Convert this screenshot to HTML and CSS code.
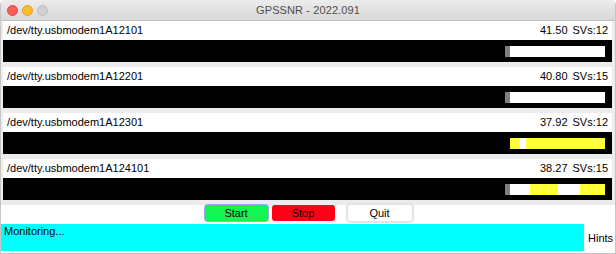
FILE: index.html
```html
<!DOCTYPE html>
<html>
<head>
<meta charset="utf-8">
<title>GPSSNR</title>
<link rel="stylesheet" href="styles.css">
</head>
<body>
<div class="window">
  <div class="titlebar">
    <div class="lights">
      <span class="light red"></span>
      <span class="light yellow"></span>
      <span class="light grey"></span>
    </div>
    <div class="title">GPSSNR - 2022.091</div>
  </div>
  <div class="rows">
    <div class="row">
      <div class="label"><span>/dev/tty.usbmodem1A12101</span><span class="stats"><span>41.50</span><span>SVs:12</span></span></div>
      <div class="bar"><div class="meter"><i class="seg g" style="width:5px"></i><i class="seg w" style="width:95px"></i></div></div>
    </div>
    <div class="row">
      <div class="label"><span>/dev/tty.usbmodem1A12201</span><span class="stats"><span>40.80</span><span>SVs:15</span></span></div>
      <div class="bar"><div class="meter"><i class="seg g" style="width:5px"></i><i class="seg w" style="width:95px"></i></div></div>
    </div>
    <div class="row">
      <div class="label"><span>/dev/tty.usbmodem1A12301</span><span class="stats"><span>37.92</span><span>SVs:12</span></span></div>
      <div class="bar"><div class="meter"><i class="seg k" style="width:5px"></i><i class="seg y" style="width:10px"></i><i class="seg w" style="width:6px"></i><i class="seg y" style="width:79px"></i></div></div>
    </div>
    <div class="row">
      <div class="label"><span>/dev/tty.usbmodem1A124101</span><span class="stats"><span>38.27</span><span>SVs:15</span></span></div>
      <div class="bar"><div class="meter"><i class="seg g" style="width:5px"></i><i class="seg w" style="width:20px"></i><i class="seg y" style="width:28px"></i><i class="seg w" style="width:22px"></i><i class="seg y" style="width:25px"></i></div></div>
    </div>
  </div>
  <div class="buttons">
    <button class="btn start">Start</button>
    <button class="btn stop">Stop</button>
    <button class="btn quit">Quit</button>
  </div>
  <div class="status">
    <div class="monitor">Monitoring...</div>
    <div class="hints">Hints</div>
  </div>
</div>
</body>
</html>
```

FILE: styles.css
```css
* { box-sizing: border-box; }
html, body {
  margin: 0;
  padding: 0;
  background: #ffffff;
}
body {
  width: 616px;
  height: 254px;
  overflow: hidden;
  font-family: "Liberation Sans", Arial, sans-serif;
  font-size: 11px;
  color: #000;
}
.window {
  width: 616px;
  height: 254px;
  display: flex;
  flex-direction: column;
  border: 1px solid #c6c6c6;
  border-top: none;
  border-radius: 5px 5px 0 0;
  overflow: hidden;
  background: #ececec;
}
.titlebar {
  height: 21px;
  flex: none;
  position: relative;
  background: linear-gradient(#ececec, #d8d8d8);
  border-bottom: 1px solid #c2c2c2;
  display: flex;
  align-items: center;
  justify-content: center;
}
.lights {
  position: absolute;
  left: 6px;
  top: 5px;
  display: flex;
  gap: 4px;
}
.light {
  width: 11px;
  height: 11px;
  border-radius: 50%;
  display: block;
}
.light.red { background: #fc5f57; border: 0.5px solid #e0443e; }
.light.yellow { background: #fdbc2e; border: 0.5px solid #dea123; }
.light.grey { background: #d0d0d0; border: 0.5px solid #bdbdbd; }
.title {
  font-size: 11px;
  color: #4d4d4d;
  letter-spacing: 0.1px;
}
.rows {
  display: flex;
  flex-direction: column;
  gap: 5px;
  padding: 0 3px 5px 2px;
}
.row {
  display: flex;
  flex-direction: column;
}
.label {
  height: 19px;
  background: #fff;
  display: flex;
  align-items: center;
  justify-content: space-between;
  padding: 0 4px 0 4px;
  line-height: 19px;
}
.stats {
  display: flex;
  gap: 5px;
}
.bar {
  height: 22px;
  background: #000;
  display: flex;
  justify-content: flex-end;
  align-items: center;
  padding-right: 7px;
}
.meter {
  display: flex;
  height: 11px;
}
.seg { display: block; height: 11px; }
.seg.g { background: #7f7f7f; }
.seg.w { background: #ffffff; }
.seg.y { background: #ffff3a; }
.seg.k { background: #000000; }
.buttons {
  height: 19px;
  flex: none;
  background: #fff;
  display: flex;
  justify-content: center;
  align-items: flex-start;
  gap: 4px;
}
.btn {
  font-family: "Liberation Sans", Arial, sans-serif;
  font-size: 11px;
  height: 16px;
  width: 63px;
  padding: 0;
  border: none;
  border-radius: 3px;
  color: #000;
  line-height: 16px;
}
.btn.start {
  background: #12f552;
  box-shadow: 0 0 0 1px #9aa8f0;
}
.btn.stop {
  background: #ff0018;
}
.btn.quit {
  background: #fff;
  margin-left: 9px;
  width: 64px;
  box-shadow: 0 0 0 2px #e4e4e4;
}
.status {
  flex: 1;
  display: flex;
  background: #fff;
  padding: 0 2px 2px 0;
}
.monitor {
  flex: none;
  width: 583px;
  background: #00ffff;
  padding: 1px 0 0 3px;
  line-height: 13px;
}
.hints {
  flex: 1;
  display: flex;
  align-items: center;
  padding: 0 0 0 4px;
}
```
